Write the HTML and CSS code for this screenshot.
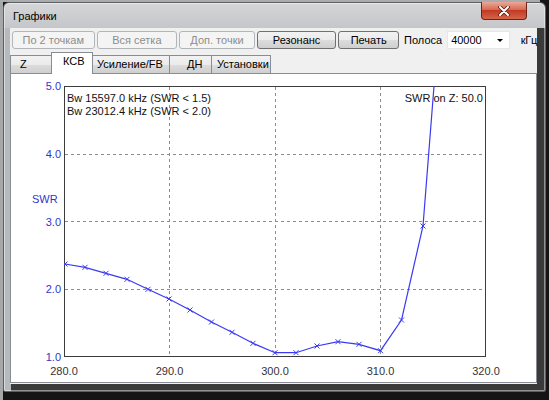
FILE: index.html
```html
<!DOCTYPE html>
<html lang="ru">
<head>
<meta charset="utf-8">
<title>Графики</title>
<link rel="stylesheet" href="styles.css">
</head>
<body>
<div class="window">
  <div class="titlebar">
    <span class="title">Графики</span>
    <div class="close">
      <svg width="14" height="10" viewBox="0 0 14 10"><path d="M3 1 L11 9 M11 1 L3 9" stroke="#5a1a10" stroke-width="3.6" stroke-linecap="round"/><path d="M3 1 L11 9 M11 1 L3 9" stroke="#ffffff" stroke-width="2" stroke-linecap="round"/></svg>
    </div>
  </div>
  <div class="client">
    <div class="toolbar">
      <button class="btn dis b1">По 2 точкам</button>
      <button class="btn dis b2">Вся сетка</button>
      <button class="btn dis b3">Доп. точки</button>
      <button class="btn b4">Резонанс</button>
      <button class="btn b5">Печать</button>
      <span class="lbl">Полоса</span>
      <div class="combo"><span class="cval">40000</span><span class="arrow"></span></div>
      <span class="unit">кГц</span>
    </div>
    <div class="tabs">
      <div class="tab t1">Z</div>
      <div class="tab sel t2">КСВ</div>
      <div class="tab t3">Усиление/FB</div>
      <div class="tab t4">ДН</div>
      <div class="tab t5">Установки</div>
    </div>
    <div class="panel">
      <svg class="chart" width="525" height="308" viewBox="11 74 525 308">
        <defs><clipPath id="plotclip"><rect x="64" y="86" width="422" height="271"/></clipPath></defs>
        <g class="grid">
          <line x1="169.5" y1="87" x2="169.5" y2="357"/>
          <line x1="275.5" y1="87" x2="275.5" y2="357"/>
          <line x1="380.5" y1="87" x2="380.5" y2="357"/>
          <line x1="65" y1="154.5" x2="486" y2="154.5"/>
          <line x1="65" y1="221.5" x2="486" y2="221.5"/>
          <line x1="65" y1="289.5" x2="486" y2="289.5"/>
        </g>
        <rect class="box" x="64.5" y="86.5" width="421" height="270"/>
        <g clip-path="url(#plotclip)">
          <polyline class="curve" points="65,264 85,267.3 106,273.3 127,279.3 148,289.3 169,299 190,310 211.5,322 232,332.3 253,343.3 275,352.7 296,352.7 317,346 338,341.7 359,344.3 380.5,350.7 401.5,320 423,226 444,-41"/>
          <path class="marks" d="M62.5 261.5l5 5m0 -5l-5 5 M82.5 264.8l5 5m0 -5l-5 5 M103.5 270.8l5 5m0 -5l-5 5 M124.5 276.8l5 5m0 -5l-5 5 M145.5 286.8l5 5m0 -5l-5 5 M166.5 296.5l5 5m0 -5l-5 5 M187.5 307.5l5 5m0 -5l-5 5 M209 319.5l5 5m0 -5l-5 5 M229.5 329.8l5 5m0 -5l-5 5 M250.5 340.8l5 5m0 -5l-5 5 M272.5 350.2l5 5m0 -5l-5 5 M293.5 350.2l5 5m0 -5l-5 5 M314.5 343.5l5 5m0 -5l-5 5 M335.5 339.2l5 5m0 -5l-5 5 M356.5 341.8l5 5m0 -5l-5 5 M378 348.2l5 5m0 -5l-5 5 M399 317.5l5 5m0 -5l-5 5 M420.5 223.5l5 5m0 -5l-5 5"/>
        </g>
        <g class="ylab">
          <text x="61" y="90">5.0</text>
          <text x="61" y="158">4.0</text>
          <text x="61" y="225.5">3.0</text>
          <text x="61" y="293">2.0</text>
          <text x="61" y="361">1.0</text>
        </g>
        <text class="yname" x="32" y="203">SWR</text>
        <g class="xlab">
          <text x="64" y="375">280.0</text>
          <text x="169.5" y="375">290.0</text>
          <text x="275" y="375">300.0</text>
          <text x="380.5" y="375">310.0</text>
          <text x="486" y="375">320.0</text>
        </g>
        <text class="info" x="67" y="102">Bw 15597.0 kHz (SWR &lt; 1.5)</text>
        <text class="info" x="67" y="115">Bw 23012.4 kHz (SWR &lt; 2.0)</text>
        <text class="info end" x="483" y="102">SWR on Z: 50.0</text>
      </svg>
    </div>
  </div>
</div>
</body>
</html>
```

FILE: styles.css
```css
* { box-sizing: border-box; }
html, body { margin: 0; padding: 0; }
body {
  width: 549px;
  height: 400px;
  overflow: hidden;
  font-family: "Liberation Sans", Arial, sans-serif;
  font-size: 11px;
  background:
    linear-gradient(to bottom, #a9abad 0, #a9abad 2px, transparent 2px) no-repeat 0 0 / 540px 2px,
    linear-gradient(to right, #a5a7a9 0, #a5a7a9 3px, #151515 3px);
}
.window {
  margin: 2px 0 0 3px;
  width: 543px;
  height: 390px;
  border: 1px solid #5d6166;
  border-radius: 6px 6px 2px 2px;
  padding: 0 8px 7px 6px;
  display: flex;
  flex-direction: column;
  background:
    linear-gradient(to bottom, #d4d6d8 0, #c4c6c9 25px, transparent 25px),
    linear-gradient(to right, #b7babd 0, #b7babd 7px, #3a3a3a 7px);
  box-shadow: inset 0 0 0 1px rgba(255,255,255,0.45);
}
.titlebar {
  height: 25px;
  display: flex;
  align-items: center;
}
.title {
  margin-left: 3px;
  color: #000;
  font-size: 11px;
}
.close {
  margin-left: auto;
  margin-right: 10px;
  align-self: flex-start;
  margin-top: -1px;
  width: 46px;
  height: 18px;
  border: 1px solid #6b231a;
  border-top: none;
  border-radius: 0 0 4px 4px;
  background: linear-gradient(#eaa898 0, #d86a52 45%, #c23a24 50%, #d4654a 100%);
  display: flex;
  align-items: center;
  justify-content: center;
}
.close svg { display: block; }
.client {
  width: 527px;
  height: 356px;
  background: #f0f0f0;
  display: flex;
  flex-direction: column;
}
.toolbar {
  height: 21px;
  display: flex;
  align-items: flex-start;
  padding: 3px 0 0 2px;
  gap: 2px;
}
.btn {
  height: 18px;
  padding: 0;
  margin: 0;
  font-family: "Liberation Sans", Arial, sans-serif;
  font-size: 11px;
  color: #000;
  border: 1px solid #707070;
  border-radius: 3px;
  background: linear-gradient(#f2f2f2 0, #ebebeb 50%, #dddddd 50%, #cfcfcf 100%);
}
.btn.dis {
  color: #8d8d8d;
  border-color: #b3b6b9;
  background: #f4f4f4;
}
.b1 { width: 83px; }
.b2 { width: 81px; }
.b3 { width: 76px; }
.b4 { width: 80px; }
.b5 { width: 61px; }
.lbl {
  margin-left: 3px;
  line-height: 18px;
  color: #000;
}
.combo {
  margin-left: 3px;
  width: 63px;
  height: 18px;
  background: #fff;
  border: 1px solid #e6e6e6;
  display: flex;
  align-items: center;
  padding-left: 3px;
}
.cval { flex: 1; color: #000; }
.arrow {
  width: 0;
  height: 0;
  margin-right: 6px;
  border-left: 3px solid transparent;
  border-right: 3px solid transparent;
  border-top: 3px solid #000;
}
.unit {
  margin-left: 9px;
  line-height: 18px;
  color: #000;
  letter-spacing: -0.3px;
}
.tabs {
  height: 24px;
  display: flex;
  align-items: flex-end;
  position: relative;
  z-index: 1;
}
.tab {
  height: 18px;
  border: 1px solid #898c95;
  border-bottom: none;
  margin-right: -1px;
  background: linear-gradient(#f2f2f2 0, #ebebeb 50%, #dddddd 50%, #cfcfcf 100%);
  color: #000;
  line-height: 16px;
  white-space: nowrap;
}
.tab.sel {
  height: 22px;
  margin-bottom: -1px;
  background: #fff;
  line-height: 17px;
  position: relative;
}
.t1 { width: 42px; padding-left: 9px; }
.t2 { width: 42px; padding-left: 11px; }
.t3 { width: 78px; padding-left: 4px; }
.t4 { width: 43px; padding-left: 17px; }
.t5 { width: 60px; padding-left: 5px; }
.panel {
  width: 527px;
  height: 310px;
  border: 1px solid #898c95;
  background: #fff;
}
.chart { display: block; }
.grid line {
  stroke: #8c8c8c;
  stroke-width: 1;
  stroke-dasharray: 3 3;
}
.box { fill: none; stroke: #3c3c3c; stroke-width: 1; }
.curve { fill: none; stroke: #3a3af2; stroke-width: 1.2; }
.marks { fill: none; stroke: #3a3af2; stroke-width: 1; }
.chart text {
  font-family: "Liberation Sans", Arial, sans-serif;
  font-size: 11px;
}
.ylab text { fill: #3434c8; text-anchor: end; }
.yname { fill: #3434c8; }
.xlab text { fill: #333; text-anchor: middle; }
.info { fill: #111; }
.info.end { text-anchor: end; }
```
